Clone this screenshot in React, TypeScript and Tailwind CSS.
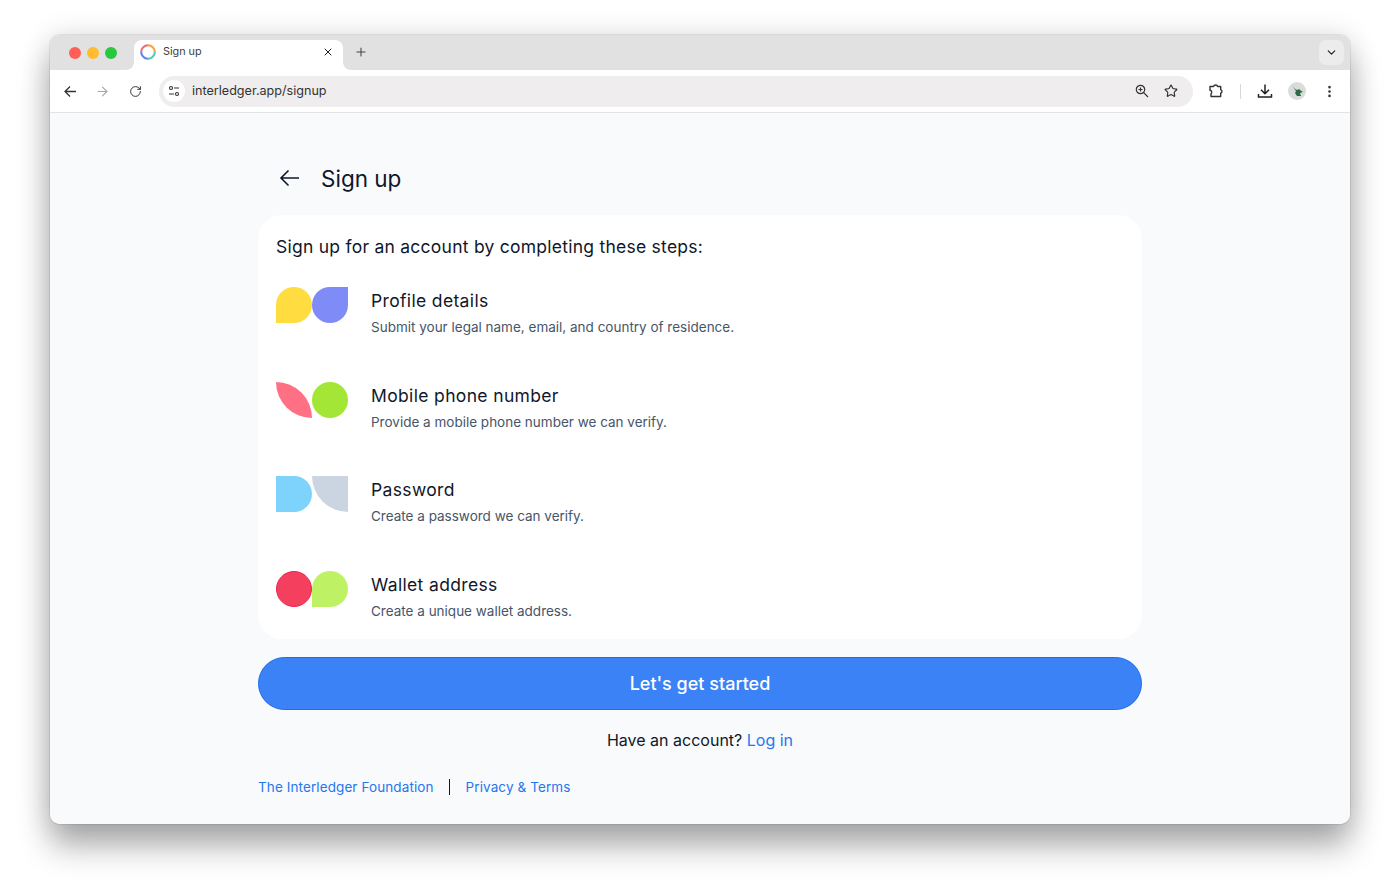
import { ArrowRight, ChevronDown, EllipsisVertical, Plus, RotateCw, Star, X } from 'lucide-react';

const steps = [
    {
        title: 'Profile details',
        text: 'Submit your legal name, email, and country of residence.',
        left: 'bg-[#ffdd40] rounded-[18px] rounded-bl-none',
        right: 'bg-[#7f8cf7] rounded-[18px] rounded-tr-none',
    },
    {
        title: 'Mobile phone number',
        text: 'Provide a mobile phone number we can verify.',
        left: 'bg-[#ff7085] rounded-tr-[36px] rounded-bl-[36px]',
        right: 'bg-[#a3e635] rounded-full',
    },
    {
        title: 'Password',
        text: 'Create a password we can verify.',
        left: 'bg-[#7dd3fc] rounded-r-[18px]',
        right: 'bg-[#cbd5e1] rounded-bl-[36px]',
    },
    {
        title: 'Wallet address',
        text: 'Create a unique wallet address.',
        left: 'bg-[#f43f5e] border border-[#f0214f] rounded-full',
        right: 'bg-[#bef264] rounded-[18px] rounded-bl-none',
    },
];

function Favicon() {
    return (
        <svg width="16" height="16" viewBox="0 0 16 16" fill="none" strokeWidth="2.1">
            <path d="M8 1.2A6.8 6.8 0 0 1 14.8 8" stroke="#f9a03f" />
            <path d="M14.8 8A6.8 6.8 0 0 1 8 14.8" stroke="#4fcdb8" />
            <path d="M8 14.8A6.8 6.8 0 0 1 1.2 8" stroke="#6384ea" />
            <path d="M1.2 8A6.8 6.8 0 0 1 8 1.2" stroke="#f0697f" />
        </svg>
    );
}

function TabCorner({ flip }: { flip?: boolean }) {
    return (
        <svg width="8" height="8" viewBox="0 0 8 8" className={flip ? 'absolute bottom-0 -right-2' : 'absolute bottom-0 -left-2'}>
            <path d={flip ? 'M0 0A8 8 0 0 0 8 8H0Z' : 'M8 0A8 8 0 0 1 0 8H8Z'} fill="#ffffff" />
        </svg>
    );
}

export default function App() {
    return (
        <div className="min-h-[890px] bg-white pt-[35px] px-[50px] font-['Inter',sans-serif]">
            <div className="h-[789px] w-[1300px] flex flex-col rounded-[10px] overflow-hidden shadow-[0_0_0_1px_rgba(0,0,0,0.07),0_22px_32px_rgba(0,0,0,0.32),0_0_30px_rgba(0,0,0,0.12)]">
                {/* tab strip */}
                <div className="h-[35px] bg-[#e1e1e1] flex items-end shrink-0">
                    <div className="flex items-center gap-[6px] pl-[19px] h-[35px] w-[84px]">
                        <span className="w-[12px] h-[12px] rounded-full bg-[#ff5f57]" />
                        <span className="w-[12px] h-[12px] rounded-full bg-[#febc2e]" />
                        <span className="w-[12px] h-[12px] rounded-full bg-[#28c840]" />
                    </div>
                    <div className="relative h-[30px] w-[209px] bg-white rounded-t-[8px] flex items-center pl-[6px] pr-[9px] pb-[6px]">
                        <TabCorner />
                        <TabCorner flip />
                        <Favicon />
                        <span className="ml-[7px] pt-[1px] text-[10.8px] text-[#3c3c3c] flex-1">Sign up</span>
                        <X size={12} strokeWidth={2} className="text-[#1f1f1f]" />
                    </div>
                    <div className="h-[30px] flex items-center ml-[11px] flex-1 pb-[6px]">
                        <Plus size={14} strokeWidth={1.8} className="text-[#444]" />
                    </div>
                    <div className="w-[25px] h-[25px] mb-[5px] mr-[6px] rounded-[7px] bg-[#ececec] flex items-center justify-center">
                        <ChevronDown size={13} strokeWidth={2.2} className="text-[#222]" />
                    </div>
                </div>

                {/* toolbar */}
                <div className="h-[43px] bg-white border-b border-[#e3e3e3] flex items-center shrink-0 pl-[13px] text-[#333]">
                    <svg width="15" height="15" viewBox="0 0 15 15" fill="none" stroke="currentColor" strokeWidth="1.3">
                        <path d="M2 7.5h11M7 2.5l-5 5 5 5" />
                    </svg>
                    <ArrowRight size={15} strokeWidth={1.8} className="ml-[17px] text-[#a8a8a8]" />
                    <RotateCw size={13} strokeWidth={1.8} className="ml-[19px]" />
                    <div className="ml-[17px] h-[31px] w-[1034px] rounded-full bg-[#efeded] flex items-center pl-[4px] pr-[15px]">
                        <div className="w-[22px] h-[22px] rounded-full bg-white flex items-center justify-center">
                            <svg width="12" height="12" viewBox="0 0 12 12" fill="none" stroke="#333" strokeWidth="1.1">
                                <circle cx="3" cy="3" r="1.5" />
                                <path d="M6 3h5M1 9h5" />
                                <circle cx="9" cy="9" r="1.5" />
                            </svg>
                        </div>
                        <span className="ml-[7px] pt-[1px] text-[12.6px] text-[#333] flex-1">interledger.app/signup</span>
                        <svg width="14" height="14" viewBox="0 0 14 14" fill="none" stroke="#333" strokeWidth="1.2">
                            <circle cx="5.5" cy="5.5" r="4.2" />
                            <path d="M8.7 8.7l4.3 4.3M3.5 5.5h4M5.5 3.5v4" />
                        </svg>
                        <Star size={14} strokeWidth={2} className="ml-[15px]" />
                    </div>
                    <svg width="16" height="16" viewBox="0 0 16 16" fill="none" stroke="#333" strokeWidth="1.4" className="ml-[15px]">
                        <path d="M2 3.5h3.5a2.2 2.2 0 0 1 4.2 0h3v3.1a1.9 1.9 0 0 1 0 3.6v3.3H3v-2.8a1.9 1.9 0 0 0-1-3.4Z" strokeLinejoin="round" />
                    </svg>
                    <div className="ml-[16px] w-px h-[15px] bg-[#d8d8d8]" />
                    <svg width="16" height="16" viewBox="0 0 16 16" fill="none" stroke="#222" strokeWidth="1.5" className="ml-[16px]">
                        <path d="M8 1.5v9M4 6.8l4 4 4-4M1.5 11v3h13v-3" />
                    </svg>
                    <div className="ml-[15px] w-[18px] h-[18px] rounded-full bg-[#d9dcd9] flex items-center justify-center">
                        <svg width="16" height="16" viewBox="0 0 16 16">
                            <path d="M3 3l3 3 2 1 2-1 1 1 3 2-3 1 1 3H8L6 10 7 8Z" fill="#2e6b45" />
                        </svg>
                    </div>
                    <EllipsisVertical size={15} strokeWidth={2.2} className="ml-[16px]" />
                </div>

                {/* page */}
                <div className="flex-1 bg-[#f8fafc] flex flex-col items-center">
                    <div className="w-[884px]">
                        <div className="h-[102px] flex items-center pl-[20px] pt-[28px]">
                            <svg width="24" height="24" viewBox="0 0 24 24" fill="none" stroke="#0f172a" strokeWidth="1.6">
                                <path d="M10.5 19.5 3 12l7.5-7.5M3 12h18" />
                            </svg>
                            <h1 className="ml-[19px] pt-[2px] text-[22.5px] text-[#0f172a]">Sign up</h1>
                        </div>
                        <div className="bg-white rounded-[24px] h-[424px] pl-[18px] pt-[18px]">
                            <p className="text-[17.5px] tracking-[0.25px] leading-[28px] text-[#0f172a]">Sign up for an account by completing these steps:</p>
                            <div className="mt-[26px] flex flex-col gap-[22.67px]">
                                {steps.map((step) => (
                                    <div key={step.title} className="flex h-[72px]">
                                        <div className="flex w-[72px] h-[36px] shrink-0">
                                            <div className={`w-[36px] h-[36px] ${step.left}`} />
                                            <div className={`w-[36px] h-[36px] ${step.right}`} />
                                        </div>
                                        <div className="ml-[23px]">
                                            <h2 className="text-[17.5px] tracking-[0.35px] leading-[28px] text-[#0f172a]">{step.title}</h2>
                                            <p className="mt-[2px] text-[13.5px] leading-[20px] text-[#475569]">{step.text}</p>
                                        </div>
                                    </div>
                                ))}
                            </div>
                        </div>
                        <button className="mt-[18px] w-full h-[53px] rounded-full bg-[#3b82f6] border border-[#1d6fe8] text-white text-[18px] font-medium">
                            Let's get started
                        </button>
                        <p className="mt-[18px] text-center text-[16px] leading-[24px] text-[#0f172a]">
                            Have an account? <a className="text-[#2577ee]">Log in</a>
                        </p>
                        <div className="mt-[25px] flex items-center text-[13.5px] tracking-[0.1px] leading-[20px] text-[#2577ee]">
                            <a>The Interledger Foundation</a>
                            <span className="ml-[15px] mr-[16px] w-px h-[16px] bg-[#0f172a]" />
                            <a>Privacy &amp; Terms</a>
                        </div>
                    </div>
                </div>
            </div>
        </div>
    );
}
